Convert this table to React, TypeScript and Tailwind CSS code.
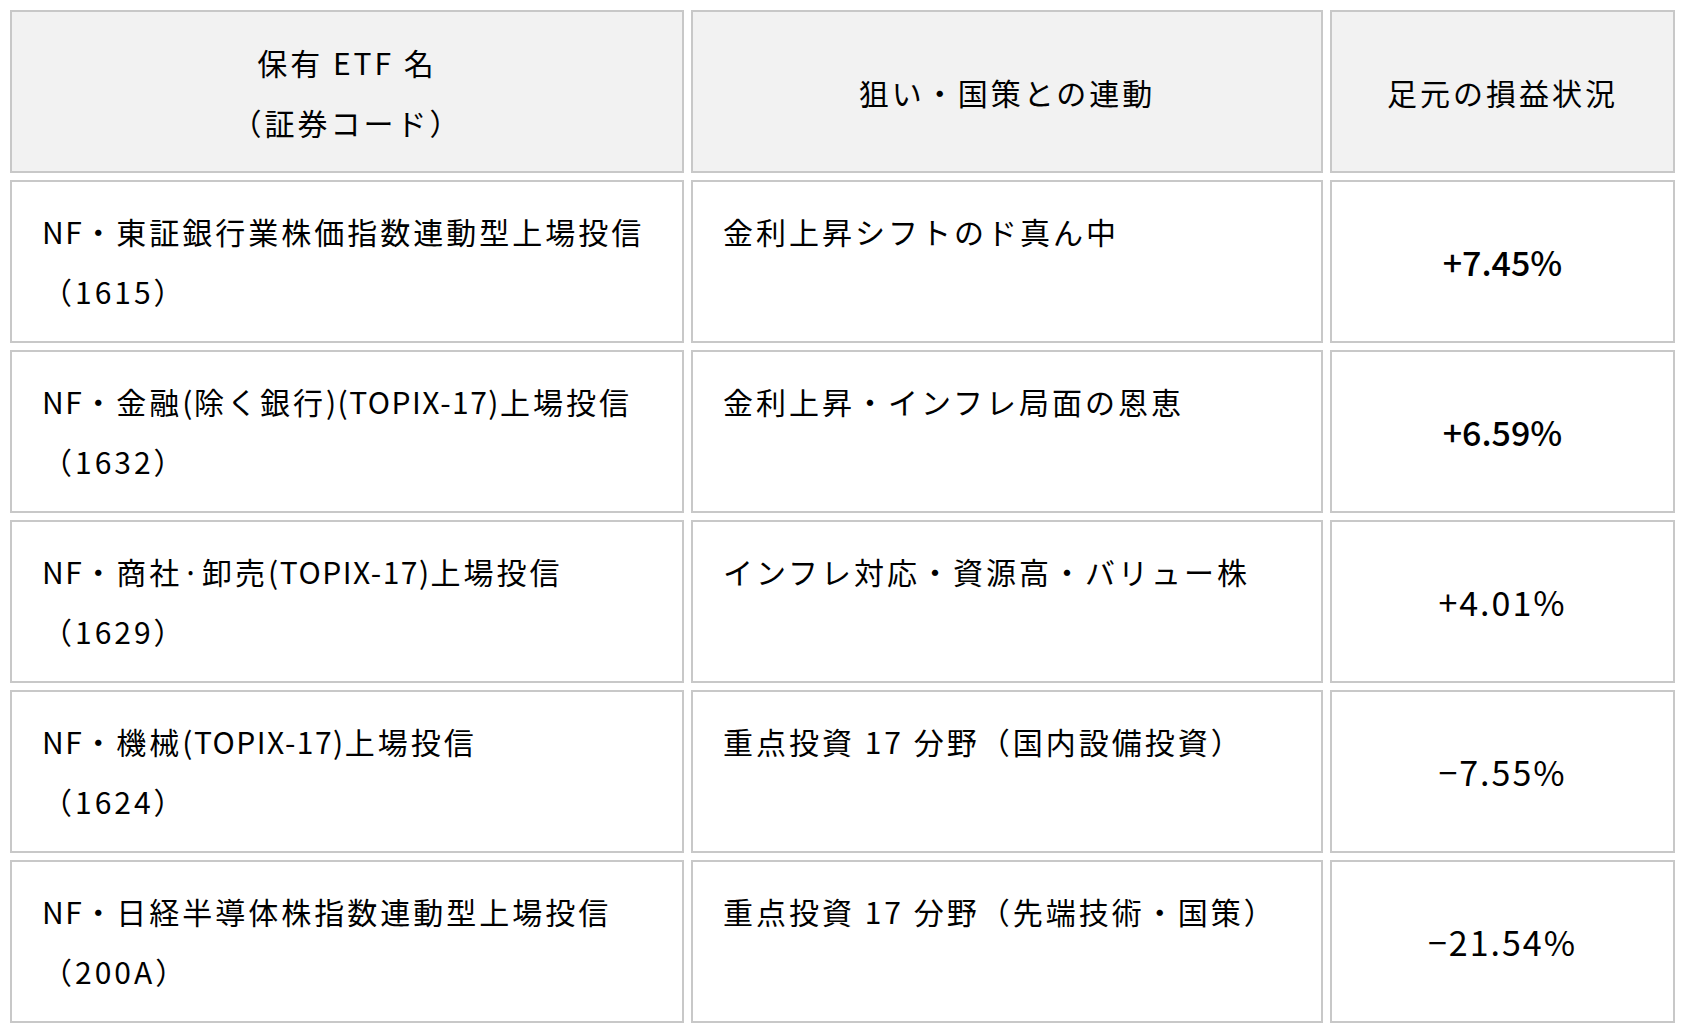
import React from "react";

const rows = [
  { name: "NF・東証銀行業株価指数連動型上場投信", code: "（1615）", aim: "金利上昇シフトのド真ん中", pl: "+7.45%", bold: true },
  { name: "NF・金融(除く銀行)(TOPIX-17)上場投信", code: "（1632）", aim: "金利上昇・インフレ局面の恩恵", pl: "+6.59%", bold: true },
  { name: "NF・商社·卸売(TOPIX-17)上場投信", code: "（1629）", aim: "インフレ対応・資源高・バリュー株", pl: "+4.01%", bold: false },
  { name: "NF・機械(TOPIX-17)上場投信", code: "（1624）", aim: "重点投資 17 分野（国内設備投資）", pl: "−7.55%", bold: false },
  { name: "NF・日経半導体株指数連動型上場投信", code: "（200A）", aim: "重点投資 17 分野（先端技術・国策）", pl: "−21.54%", bold: false },
];

function Mixed({ text }: { text: string }) {
  const parts = text.split(/([\x20-\x7E]+)/).filter((p) => p.length > 0);
  return (
    <>
      {parts.map((p, i) =>
        /^[\x20-\x7E]+$/.test(p) ? (
          <span key={i} className="tracking-[1.5px]">
            {p}
          </span>
        ) : (
          <span key={i}>{p}</span>
        )
      )}
    </>
  );
}

export default function App() {
  return (
    <div
      className="min-h-[1025px] w-[1682px] bg-white pl-[10px] pt-[10px] text-black"
      style={{ fontFamily: '"Noto Sans CJK JP", "Noto Sans", sans-serif' }}
    >
      <div className="grid grid-cols-[674px_632px_345px] auto-rows-[163px] gap-[7px] text-[30px] leading-[60px] tracking-[3px]">
        <div className="flex flex-col items-center justify-center border-2 border-[#c8c8c8] bg-[#f2f2f2] text-center">
          <div>保有 ETF 名</div>
          <div>（証券コード）</div>
        </div>
        <div className="flex items-center justify-center border-2 border-[#c8c8c8] bg-[#f2f2f2] text-center">
          狙い・国策との連動
        </div>
        <div className="flex items-center justify-center border-2 border-[#c8c8c8] bg-[#f2f2f2] text-center">
          足元の損益状況
        </div>
        {rows.map((r) => (
          <React.Fragment key={r.code}>
            <div className="border-2 border-[#c8c8c8] px-[30px] pt-[19px]">
              <div className="whitespace-nowrap">
                <Mixed text={r.name} />
              </div>
              <div className="whitespace-nowrap">{r.code}</div>
            </div>
            <div className="border-2 border-[#c8c8c8] px-[30px] pt-[19px]">
              <div className="whitespace-nowrap">{r.aim}</div>
            </div>
            <div className="flex items-center justify-center border-2 border-[#c8c8c8]">
              <span
                className={
                  r.bold
                    ? "text-[34px] font-medium tracking-[0px]"
                    : "text-[34px] font-normal tracking-[2px]"
                }
              >
                {r.pl}
              </span>
            </div>
          </React.Fragment>
        ))}
      </div>
    </div>
  );
}
